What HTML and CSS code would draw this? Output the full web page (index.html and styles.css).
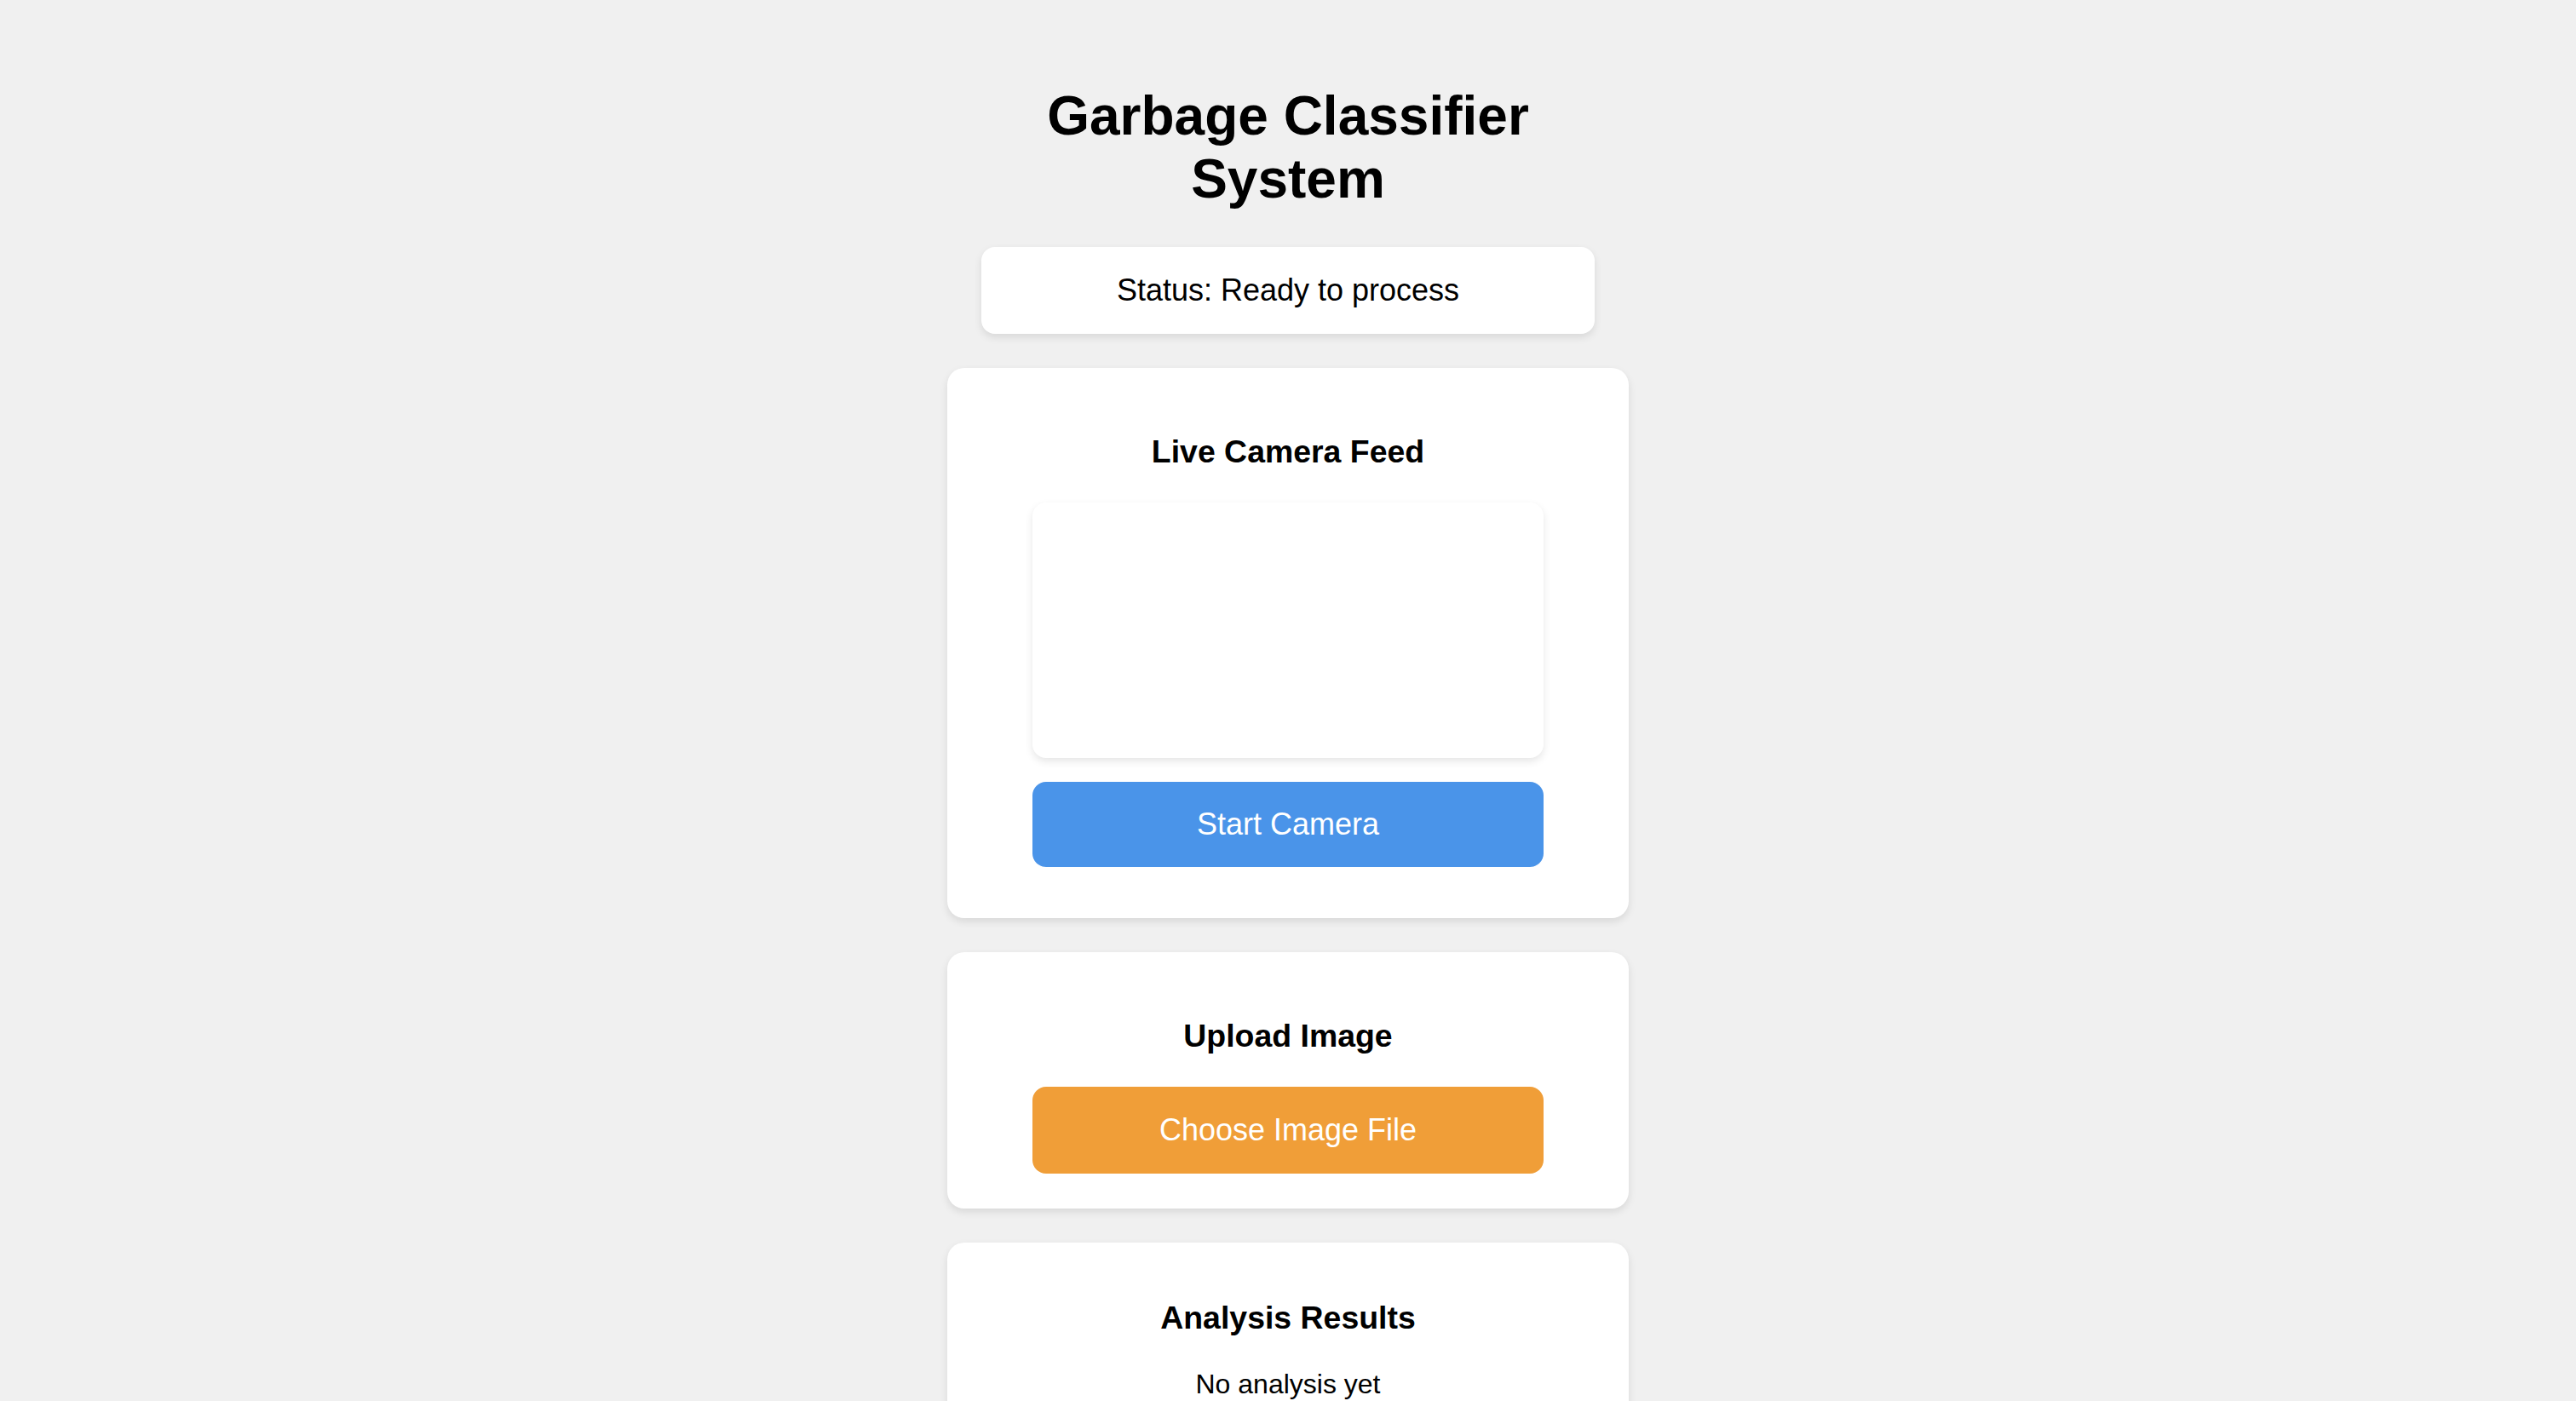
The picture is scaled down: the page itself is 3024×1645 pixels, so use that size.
FILE: index.html
```html
<!DOCTYPE html>
<html lang="en">
<head>
<meta charset="utf-8">
<title>Garbage Classifier System</title>
<link rel="stylesheet" href="styles.css">
</head>
<body>
<div class="container">
  <h1 class="title">Garbage Classifier System</h1>
  <div class="status">Status: Ready to process</div>

  <section class="card card-camera">
    <h3 class="card-title">Live Camera Feed</h3>
    <div class="camera-view"></div>
    <button class="btn btn-camera">Start Camera</button>
  </section>

  <section class="card card-upload">
    <h3 class="card-title">Upload Image</h3>
    <button class="btn btn-upload">Choose Image File</button>
  </section>

  <section class="card card-results">
    <h3 class="card-title">Analysis Results</h3>
    <p class="result-text">No analysis yet</p>
  </section>
</div>
</body>
</html>
```
FILE: styles.css
```css
html, body {
  background: #f0f0f0;
}
body {
  margin: 16px;
  padding: 40px;
  font-family: "Liberation Sans", Arial, Helvetica, sans-serif;
  color: #000;
}
.container {
  width: 800px;
  margin: 0 auto;
}
.title {
  max-width: 720px;
  margin: 43px auto;
  font-size: 64px;
  font-weight: bold;
  text-align: center;
  line-height: normal;
}
.status {
  width: 720px;
  box-sizing: border-box;
  margin: 0 auto 40px;
  padding: 30px;
  background: #fff;
  border-radius: 16px;
  box-shadow: 0 4px 10px rgba(0, 0, 0, 0.1);
  font-size: 36px;
  text-align: center;
}
.card {
  background: #fff;
  border-radius: 20px;
  padding: 40px;
  margin-bottom: 40px;
  box-shadow: 0 4px 10px rgba(0, 0, 0, 0.1);
  text-align: center;
}
.card-upload {
  padding-bottom: 41px;
}
.card-results {
  padding-top: 30px;
}
.card-title {
  font-size: 37.44px;
  font-weight: bold;
  margin: 37.44px 0;
  line-height: normal;
}
.camera-view {
  width: 600px;
  height: 300px;
  margin: 0 auto 28px;
  background: #fff;
  border-radius: 16px;
  box-shadow: 0 4px 10px rgba(0, 0, 0, 0.1);
}
.btn {
  display: block;
  width: 600px;
  height: 100px;
  margin: 0 auto;
  border: none;
  border-radius: 16px;
  color: #fff;
  font-family: "Liberation Sans", Arial, Helvetica, sans-serif;
  font-size: 36px;
  cursor: pointer;
}
.btn-camera {
  background: #4a94e9;
  margin-bottom: 20px;
}
.btn-upload {
  background: #f09e38;
  height: 102px;
}
.result-text {
  font-size: 32px;
  margin: 37.44px 0;
}
```
